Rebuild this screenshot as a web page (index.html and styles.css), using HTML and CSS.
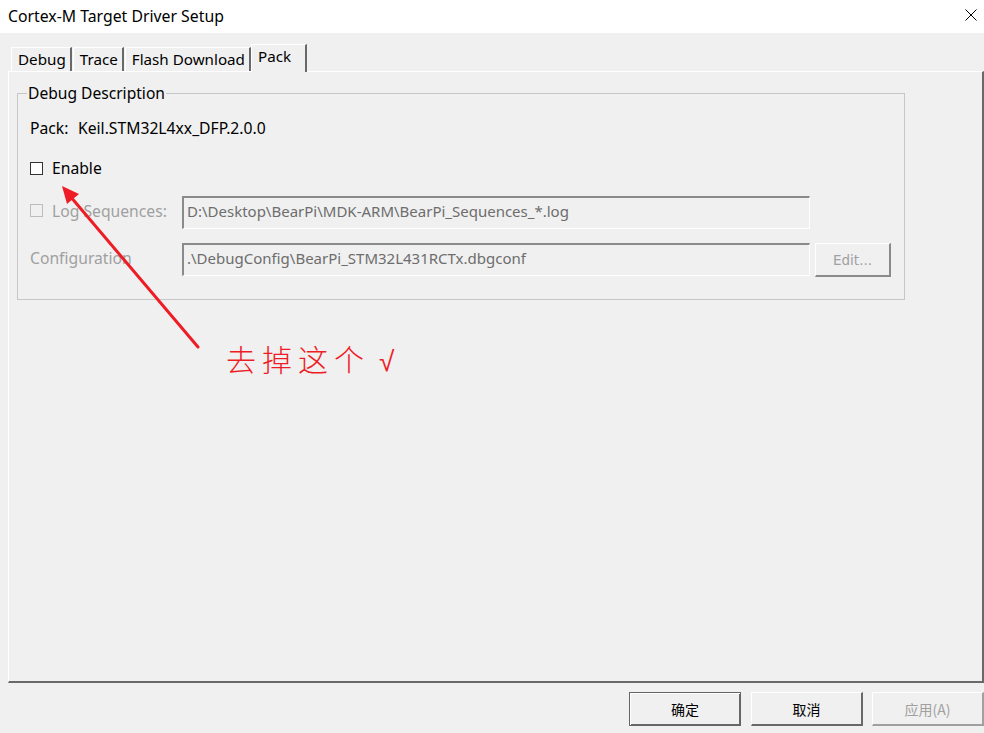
FILE: index.html
```html
<!DOCTYPE html>
<html>
<head>
<meta charset="utf-8">
<link rel="stylesheet" href="styles.css">
</head>
<body>
<div class="window">
  <div class="titlebar">
    <span class="title">Cortex-M Target Driver Setup</span>
    <span class="close">
      <svg width="12" height="12" viewBox="0 0 12 12"><path d="M0.5 0.5 L11.5 11.5 M11.5 0.5 L0.5 11.5" stroke="#000" stroke-width="1" fill="none"/></svg>
    </span>
  </div>
  <div class="body">
    <div class="tabs">
      <div class="tab">Debug</div>
      <div class="tab">Trace</div>
      <div class="tab">Flash Download</div>
      <div class="tab active">Pack</div>
    </div>
    <div class="panel">
      <fieldset class="group">
        <legend>Debug Description</legend>
        <div class="row pack-row"><span class="pack-label">Pack:</span><span>Keil.STM32L4xx_DFP.2.0.0</span></div>
        <div class="row enable-row"><span class="cb"></span><span>Enable</span></div>
        <div class="grid">
          <div class="cell-label"><span class="cb disabled"></span><span class="dis-text">Log Sequences:</span></div>
          <div class="input">D:\Desktop\BearPi\MDK-ARM\BearPi_Sequences_*.log</div>
          <div></div>
          <div class="cell-label"><span class="dis-text">Configuration</span></div>
          <div class="input">.\DebugConfig\BearPi_STM32L431RCTx.dbgconf</div>
          <div class="btn-edit">Edit...</div>
        </div>
      </fieldset>
    </div>
    <div class="footer">
      <div class="btn default">确定</div>
      <div class="btn">取消</div>
      <div class="btn disabled">应用(A)</div>
    </div>
  </div>
  <svg class="annot-arrow" width="984" height="733" viewBox="0 0 984 733">
    <line x1="198" y1="347" x2="70" y2="196" stroke="#ee1c25" stroke-width="3" stroke-linecap="round"/>
    <polygon points="62,186 79,194 67,204" fill="#ee1c25"/>
  </svg>
  <div class="annot-text"><span class="annot-words">去掉这个</span><span class="tick">√</span></div>
</div>
</body>
</html>
```
FILE: styles.css
```css
html, body {
  margin: 0;
  padding: 0;
}
body {
  width: 984px;
  height: 733px;
  overflow: hidden;
  background: #f0f0f0;
  font-family: "Noto Sans", "Noto Sans CJK SC", sans-serif;
  font-size: 15.7px;
  color: #000;
}
.window {
  position: relative;
  width: 984px;
  height: 733px;
}
.titlebar {
  height: 33px;
  background: #fff;
  display: flex;
  align-items: center;
  justify-content: space-between;
  padding-left: 8px;
  box-sizing: border-box;
}
.title {
  font-size: 15.8px;
  margin-top: -2px;
}
.close {
  width: 12px;
  height: 12px;
  margin-right: 7px;
  margin-top: -3px;
  display: flex;
}
.body {
  display: flex;
  flex-direction: column;
}
.tabs {
  display: flex;
  align-items: flex-end;
  height: 38px;
  padding-left: 11px;
  box-sizing: border-box;
}
.tab {
  height: 24px;
  box-sizing: border-box;
  border-top: 1px solid #fff;
  border-left: 1px solid #fff;
  border-right: 2px solid #696969;
  padding: 0 4px 0 6px;
  line-height: 22px;
  font-size: 15.2px;
  margin-right: 1px;
}
.tab.active {
  height: 28px;
  margin-bottom: -1px;
  background: #f0f0f0;
  position: relative;
  z-index: 1;
  line-height: 22px;
  padding: 0 14px 0 6px;
  margin-left: -1px;
}
.panel {
  margin-left: 8px;
  width: 976px;
  height: 612px;
  box-sizing: border-box;
  border-top: 1px solid #fff;
  border-left: 1px solid #fff;
  border-right: 2px solid #696969;
  border-bottom: 2px solid #696969;
  padding: 11px 0 0 8px;
}
.group {
  margin: 0;
  width: 888px;
  box-sizing: border-box;
  border: 1px solid #c6c6c6;
  padding: 0 0 22px 12px;
}
.group legend {
  margin-left: -3px;
  padding: 0 1px;
  font-size: 15.6px;
  line-height: 20px;
}
.row {
  display: flex;
  align-items: center;
  height: 20px;
}
.pack-row {
  margin-top: 15px;
}
.pack-label {
  width: 48px;
}
.enable-row {
  margin-top: 20px;
}
.cb {
  width: 13px;
  height: 13px;
  box-sizing: border-box;
  border: 1px solid #333;
  background: #fff;
  margin-right: 9px;
  flex: none;
}
.cb.disabled {
  border-color: #bcbcbc;
  background: #f0f0f0;
}
.grid {
  margin-top: 18px;
  display: grid;
  grid-template-columns: 147px 628px 76px;
  column-gap: 5px;
  row-gap: 14px;
  align-items: start;
}
.cell-label {
  display: flex;
  align-items: center;
  height: 29px;
}
.dis-text {
  color: #a0a0a0;
}
.input {
  height: 33px;
  box-sizing: border-box;
  border-top: 2px solid #8a8a8a;
  border-left: 2px solid #8a8a8a;
  border-right: 1px solid #fff;
  border-bottom: 1px solid #fff;
  color: #6d6d6d;
  padding: 0 0 0 3px;
  line-height: 26px;
  font-size: 15px;
  white-space: nowrap;
  overflow: hidden;
}
.btn-edit {
  height: 34px;
  box-sizing: border-box;
  border-top: 1px solid #fff;
  border-left: 1px solid #fff;
  border-right: 2px solid #8a8a8a;
  border-bottom: 2px solid #8a8a8a;
  color: #a0a0a0;
  font-family: "DejaVu Sans", sans-serif;
  font-size: 13.5px;
  display: flex;
  align-items: center;
  justify-content: center;
}
.footer {
  display: flex;
  justify-content: flex-end;
  margin-top: 9px;
}
.btn {
  width: 112px;
  height: 34px;
  box-sizing: border-box;
  border-top: 1px solid #fff;
  border-left: 1px solid #fff;
  border-right: 2px solid #696969;
  border-bottom: 2px solid #696969;
  display: flex;
  align-items: center;
  justify-content: center;
  font-family: "Noto Sans CJK SC", sans-serif;
  font-size: 14px;
  margin-left: 10px;
}
.btn.default {
  border: 1px solid #646464;
  box-shadow: inset 1px 1px 0 #fff, inset -1px -1px 0 #696969;
}
.btn.disabled {
  margin-left: 9px;
  color: #a0a0a0;
  border-right-color: #a0a0a0;
  border-bottom-color: #a0a0a0;
}
.annot-arrow {
  position: absolute;
  left: 0;
  top: 0;
  pointer-events: none;
}
.annot-text {
  position: absolute;
  left: 226px;
  top: 336px;
  color: #ee1c25;
  font-family: "Noto Sans CJK SC", sans-serif;
  font-weight: 300;
  font-size: 30px;
  white-space: nowrap;
  display: flex;
  align-items: baseline;
}
.annot-words {
  letter-spacing: 6px;
}
.tick {
  font-family: "DejaVu Sans", sans-serif;
  font-size: 28px;
  margin-left: 9px;
}
```
